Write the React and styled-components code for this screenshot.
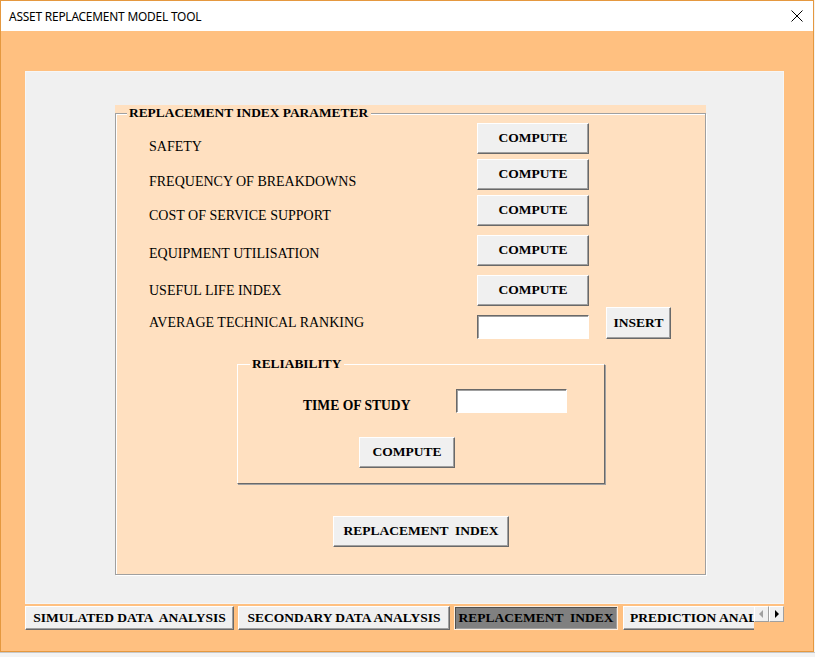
import React from 'react';
import styled, { createGlobalStyle } from 'styled-components';

const GlobalStyle = createGlobalStyle`
  html, body {
    margin: 0;
    padding: 0;
    background: #f3f3f3;
  }
  body {
    font-family: "Liberation Serif", "Times New Roman", serif;
    color: #000;
  }
`;

const Window = styled.div`
  width: 814px;
  height: 652px;
  box-sizing: border-box;
  border: 1px solid #e5983f;
  display: flex;
  flex-direction: column;
`;

const TitleBar = styled.div`
  height: 30px;
  flex-shrink: 0;
  background: #ffffff;
  display: flex;
  align-items: center;
  justify-content: space-between;
  padding: 0 10px 0 8px;
  font-family: "Noto Sans", "Liberation Sans", sans-serif;
  font-size: 11.9px;
  letter-spacing: -0.2px;
`;

const Body = styled.div`
  flex: 1;
  background: #ffc080;
  padding: 40px 0 0 24px;
  display: flex;
  flex-direction: column;
`;

const Panel = styled.div`
  width: 759px;
  height: 533px;
  box-sizing: border-box;
  background: #f0f0f0;
  border: 1px solid #f6f6f6;
  padding: 33px 0 0 89px;
`;

const Frame = styled.div`
  width: 591px;
  height: 470px;
  box-sizing: border-box;
  background: #ffe0c0;
  padding-top: 8px;
`;

const Box = styled.div`
  position: relative;
  height: 462px;
  box-sizing: border-box;
  border: 1px solid #a0a0a0;
  box-shadow: inset 1px 1px 0 #ffffff, 1px 1px 0 #ffffff;
  padding: 9px 0 0 33px;
`;

const Legend = styled.span`
  position: absolute;
  top: -9px;
  left: ${p => p.$left}px;
  padding: 0 3px 0 2px;
  background: #ffe0c0;
  font-size: 13.4px;
  font-weight: bold;
  line-height: 16px;
  white-space: pre;
`;

const Row = styled.div`
  display: flex;
  align-items: flex-start;
  height: ${p => p.$h || 31}px;
  margin-top: ${p => p.$gap || 0}px;
`;

const Label = styled.div`
  width: ${p => p.$w || 328}px;
  padding-top: ${p => p.$top}px;
  font-size: ${p => (p.$bold ? 13.6 : 14)}px;
  font-weight: ${p => (p.$bold ? 'bold' : 'normal')};
  line-height: 16px;
  white-space: nowrap;
`;

const Button = styled.button`
  width: ${p => p.$w}px;
  height: ${p => p.$h || 31}px;
  margin: 0;
  margin-left: ${p => p.$ml || 0}px;
  padding: 0;
  flex-shrink: 0;
  background: #f0f0f0;
  border: 1px solid;
  border-color: #ffffff #696969 #696969 #ffffff;
  box-shadow: inset -1px -1px 0 #a0a0a0;
  font-family: "Liberation Serif", "Times New Roman", serif;
  font-size: 13.5px;
  font-weight: bold;
  color: #000;
  white-space: pre;
  padding-bottom: 1px;
`;

const Input = styled.div`
  width: ${p => p.$w}px;
  height: 24px;
  margin-top: ${p => p.$top || 0}px;
  box-sizing: border-box;
  background: #ffffff;
  border: 1px solid;
  border-color: #696969 #ffffff #ffffff #696969;
  box-shadow: inset 1px 1px 0 #a0a0a0;
  flex-shrink: 0;
`;

const SubFrame = styled.div`
  position: relative;
  width: 368px;
  height: 120px;
  margin: 25px 0 0 88px;
  box-sizing: border-box;
  border: 1px solid;
  border-color: #ffffff #696969 #696969 #ffffff;
  box-shadow: 1px 1px 0 #a0a0a0;
  padding: 24px 0 0 65px;
`;

const TabStrip = styled.div`
  width: 759px;
  height: 24px;
  margin-top: 2px;
  display: flex;
`;

const Tabs = styled.div`
  flex: 1;
  display: flex;
  gap: 4px;
  overflow: hidden;
`;

const Tab = styled.div`
  width: ${p => p.$w}px;
  flex-shrink: 0;
  box-sizing: border-box;
  margin-left: ${p => p.$ml || 0}px;
  display: flex;
  align-items: center;
  background: ${p => (p.$active ? '#808080' : '#f0f0f0')};
  border: 1px solid;
  border-color: ${p => (p.$active ? '#fff0e0' : '#ffffff #696969 #696969 #ffffff')};
  box-shadow: ${p => (p.$active ? 'inset 1px 1px 0 #505050, inset -1px -1px 0 #a0a0a0' : 'inset -1px -1px 0 #a0a0a0')};
  font-size: 13.5px;
  font-weight: bold;
  white-space: pre;
  padding-bottom: 1px;
  justify-content: ${p => (p.$clip ? 'flex-start' : 'center')};
  padding-left: ${p => (p.$clip ? 6 : 0)}px;
`;

const Arrows = styled.div`
  display: flex;
  align-items: flex-start;
`;

const ArrowBtn = styled.div`
  width: 15px;
  height: 16px;
  box-sizing: border-box;
  background: #f0f0f0;
  border: 1px solid;
  border-color: #ffffff #a0a0a0 #a0a0a0 #ffffff;
  display: flex;
  align-items: center;
  justify-content: center;
`;

const BottomStrip = styled.div`
  width: 815px;
  height: 5px;
  background: #f3f3f3;
  border-top: 1px solid #c8c8c8;
  box-sizing: border-box;
`;

export default function App() {
  return (
    <>
      <GlobalStyle />
      <Window>
        <TitleBar>
          <span>ASSET REPLACEMENT MODEL TOOL</span>
          <svg width="12" height="12" viewBox="0 0 12 12">
            <path d="M0.5 0.5 L11.5 11.5 M11.5 0.5 L0.5 11.5" stroke="#000" strokeWidth="1" />
          </svg>
        </TitleBar>
        <Body>
          <Panel>
            <Frame>
              <Box>
                <Legend $left={11}>REPLACEMENT INDEX PARAMETER</Legend>
                <Row>
                  <Label $top={16}>SAFETY</Label>
                  <Button $w={112}>COMPUTE</Button>
                </Row>
                <Row $gap={5}>
                  <Label $top={15}>FREQUENCY OF BREAKDOWNS</Label>
                  <Button $w={112}>COMPUTE</Button>
                </Row>
                <Row $gap={5}>
                  <Label $top={13}>COST OF SERVICE SUPPORT</Label>
                  <Button $w={112}>COMPUTE</Button>
                </Row>
                <Row $gap={9}>
                  <Label $top={11}>EQUIPMENT UTILISATION</Label>
                  <Button $w={112}>COMPUTE</Button>
                </Row>
                <Row $gap={9}>
                  <Label $top={8}>USEFUL LIFE INDEX</Label>
                  <Button $w={112}>COMPUTE</Button>
                </Row>
                <Row $gap={1} $h={32}>
                  <Label $top={8}>AVERAGE TECHNICAL RANKING</Label>
                  <Input $w={112} $top={8} />
                  <Button $w={65} $h={32} $ml={17}>INSERT</Button>
                </Row>

                <SubFrame>
                  <Legend $left={12}>RELIABILITY</Legend>
                  <Row $h={24}>
                    <Label $w={153} $top={9} $bold>TIME OF STUDY</Label>
                    <Input $w={111} />
                  </Row>
                  <Row $gap={24}>
                    <Button $w={96} $ml={56}>COMPUTE</Button>
                  </Row>
                </SubFrame>

                <Row $gap={32}>
                  <Button $w={176} $ml={184}>REPLACEMENT  INDEX</Button>
                </Row>
              </Box>
            </Frame>
          </Panel>
          <TabStrip>
            <Tabs>
              <Tab $w={209}>SIMULATED DATA  ANALYSIS</Tab>
              <Tab $w={212}>SECONDARY DATA ANALYSIS</Tab>
              <Tab $w={164} $active>REPLACEMENT  INDEX</Tab>
              <Tab $w={160} $ml={1} $clip>PREDICTION ANALYSIS</Tab>
            </Tabs>
            <Arrows>
              <ArrowBtn>
                <svg width="5" height="8" viewBox="0 0 5 8"><path d="M4 0 L0 4 L4 8 Z" fill="#a0a0a0" /></svg>
              </ArrowBtn>
              <ArrowBtn>
                <svg width="5" height="8" viewBox="0 0 5 8"><path d="M1 0 L5 4 L1 8 Z" fill="#000" /></svg>
              </ArrowBtn>
            </Arrows>
          </TabStrip>
        </Body>
      </Window>
      <BottomStrip />
    </>
  );
}
